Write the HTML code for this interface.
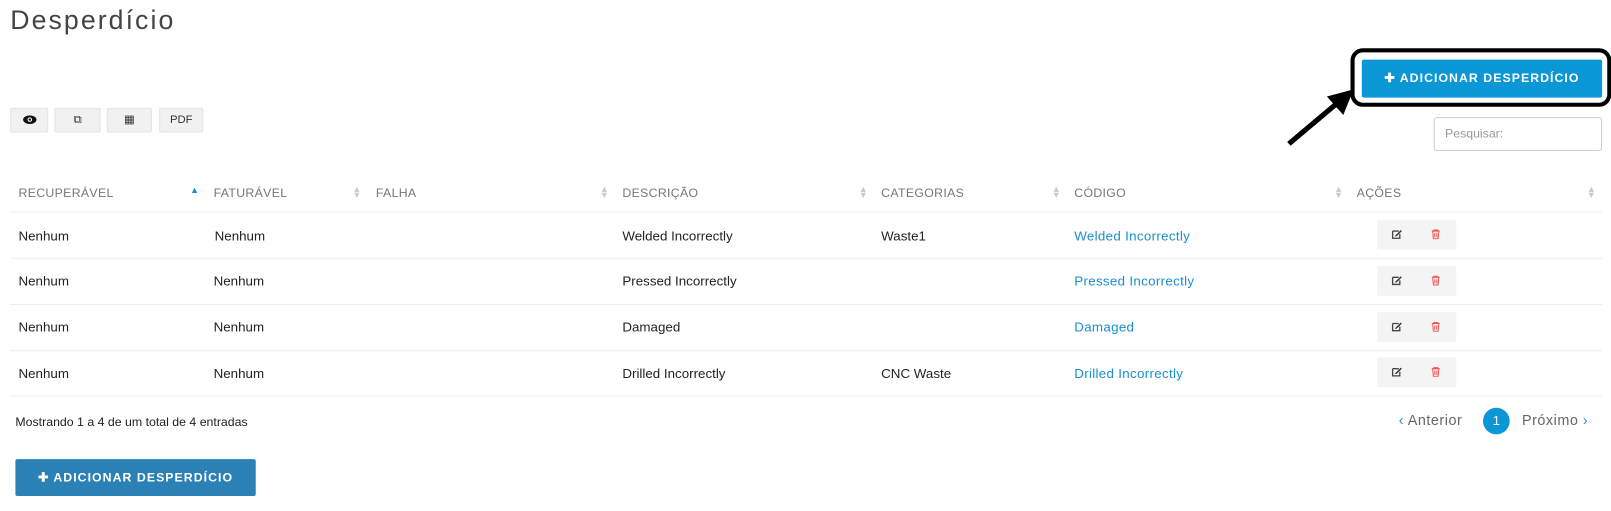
<!DOCTYPE html><html><head><style>
body{margin:0;width:1611px;height:511px;background:#fff;font-family:"Liberation Sans",sans-serif;overflow:hidden;color:#333}
#w{position:relative;width:1560px;height:495px;transform:scale(1.027);transform-origin:0 0}
.a{position:absolute}
.t{font-size:13px;color:#222}
.h{font-size:12px;color:#777;letter-spacing:.3px}
.s{position:absolute;font-size:9px;color:#ccc;line-height:6px}
.line{position:absolute;left:10px;width:1550px;height:1px;background:#eee}
.tb{position:absolute;top:105px;height:22px;background:#f1f1f1;border:1px solid #e3e3e3;border-radius:2px;font-size:11px;text-align:center;line-height:22px;color:#333}
.act{position:absolute;left:1341px;width:77px;height:29px;background:#f4f4f4}
.act svg{position:absolute;top:9px}
.lk{color:#1a8fd0;font-size:13px;letter-spacing:.3px}
.btn{position:absolute;color:#fff;font-size:12px;font-weight:bold;letter-spacing:1px;text-align:center}
</style></head><body><div id="w">
<div class="a" style="left:10px;top:4px;font-size:26px;color:#444;letter-spacing:2px">Desperdício</div>
<div class="tb" style="left:10px;width:35px"><svg width="14" height="9" viewBox="0 0 14 9" style="vertical-align:-1px"><ellipse cx="7" cy="4.5" rx="6.5" ry="4.2" fill="#111"/><circle cx="7" cy="4.5" r="2.2" fill="#fff"/><circle cx="7" cy="4.5" r="1.2" fill="#111"/></svg></div>
<div class="tb" style="left:53px;width:43px">⧉</div>
<div class="tb" style="left:104px;width:42px">▦</div>
<div class="tb" style="left:155px;width:41px">PDF</div>
<div class="a" style="left:1315px;top:47px;width:246px;height:49px;border:4px solid #000;border-radius:12px"></div>
<div class="btn" style="left:1326px;top:58px;width:234px;height:37px;line-height:37px;background:#0b96d6;border-radius:2px">✚ ADICIONAR DESPERDÍCIO</div>
<svg class="a" style="left:1250px;top:80px" width="80" height="65"><line x1="5" y1="60" x2="55" y2="18" stroke="#000" stroke-width="5"/><polygon points="68,7 42,14 58,32" fill="#000"/></svg>
<div class="a" style="left:1396px;top:114px;width:162px;height:31px;border:1px solid #ccc;border-radius:3px;font-size:12px;color:#999;line-height:31px;text-indent:10px">Pesquisar:</div>
<div class="a h" style="left:18px;top:181px">RECUPERÁVEL</div><div class="s" style="left:185px;top:182px;color:#1a8fd0">▲</div>
<div class="a h" style="left:208px;top:181px">FATURÁVEL</div><div class="s" style="left:343px;top:181px">▲<br>▼</div>
<div class="a h" style="left:366px;top:181px">FALHA</div><div class="s" style="left:584px;top:181px">▲<br>▼</div>
<div class="a h" style="left:606px;top:181px">DESCRIÇÃO</div><div class="s" style="left:836px;top:181px">▲<br>▼</div>
<div class="a h" style="left:858px;top:181px">CATEGORIAS</div><div class="s" style="left:1024px;top:181px">▲<br>▼</div>
<div class="a h" style="left:1046px;top:181px">CÓDIGO</div><div class="s" style="left:1299px;top:181px">▲<br>▼</div>
<div class="a h" style="left:1321px;top:181px">AÇÕES</div><div class="s" style="left:1545px;top:181px">▲<br>▼</div>
<div class="line" style="top:206px"></div><div class="line" style="top:251px"></div><div class="line" style="top:296px"></div><div class="line" style="top:341px"></div><div class="line" style="top:385px"></div>
<div class="a t" style="left:18px;top:222px">Nenhum</div><div class="a t" style="left:209px;top:222px">Nenhum</div><div class="a t" style="left:606px;top:222px">Welded Incorrectly</div><div class="a t" style="left:858px;top:222px">Waste1</div><div class="a lk" style="left:1046px;top:222px">Welded Incorrectly</div>
<div class="a t" style="left:18px;top:266px">Nenhum</div><div class="a t" style="left:208px;top:266px">Nenhum</div><div class="a t" style="left:606px;top:266px">Pressed Incorrectly</div><div class="a lk" style="left:1046px;top:266px">Pressed Incorrectly</div>
<div class="a t" style="left:18px;top:311px">Nenhum</div><div class="a t" style="left:208px;top:311px">Nenhum</div><div class="a t" style="left:606px;top:311px">Damaged</div><div class="a lk" style="left:1046px;top:311px">Damaged</div>
<div class="a t" style="left:18px;top:356px">Nenhum</div><div class="a t" style="left:208px;top:356px">Nenhum</div><div class="a t" style="left:606px;top:356px">Drilled Incorrectly</div><div class="a t" style="left:858px;top:356px">CNC Waste</div><div class="a lk" style="left:1046px;top:356px">Drilled Incorrectly</div>
<div class="act" style="top:214px"><svg style="left:14px" width="11" height="10"><path d="M1 2h6M1 2v7h7v-4" stroke="#444" stroke-width="1.3" fill="none"/><path d="M4 6l5-5 1 1-5 5-2 0z" fill="#333"/></svg><svg style="left:53px" width="8" height="10"><path d="M0 2h8M2 2V1h4v1M1 2l.7 7.5h4.6L7 2M3 4v4M5 4v4" stroke="#e55" stroke-width="1" fill="none"/></svg></div>
<div class="act" style="top:259px"><svg style="left:14px" width="11" height="10"><path d="M1 2h6M1 2v7h7v-4" stroke="#444" stroke-width="1.3" fill="none"/><path d="M4 6l5-5 1 1-5 5-2 0z" fill="#333"/></svg><svg style="left:53px" width="8" height="10"><path d="M0 2h8M2 2V1h4v1M1 2l.7 7.5h4.6L7 2M3 4v4M5 4v4" stroke="#e55" stroke-width="1" fill="none"/></svg></div>
<div class="act" style="top:304px"><svg style="left:14px" width="11" height="10"><path d="M1 2h6M1 2v7h7v-4" stroke="#444" stroke-width="1.3" fill="none"/><path d="M4 6l5-5 1 1-5 5-2 0z" fill="#333"/></svg><svg style="left:53px" width="8" height="10"><path d="M0 2h8M2 2V1h4v1M1 2l.7 7.5h4.6L7 2M3 4v4M5 4v4" stroke="#e55" stroke-width="1" fill="none"/></svg></div>
<div class="act" style="top:348px"><svg style="left:14px" width="11" height="10"><path d="M1 2h6M1 2v7h7v-4" stroke="#444" stroke-width="1.3" fill="none"/><path d="M4 6l5-5 1 1-5 5-2 0z" fill="#333"/></svg><svg style="left:53px" width="8" height="10"><path d="M0 2h8M2 2V1h4v1M1 2l.7 7.5h4.6L7 2M3 4v4M5 4v4" stroke="#e55" stroke-width="1" fill="none"/></svg></div>
<div class="a t" style="left:15px;top:404px;font-size:12px">Mostrando 1 a 4 de um total de 4 entradas</div>
<div class="a" style="left:1362px;top:401px;font-size:14px;color:#666;letter-spacing:.5px"><span style="color:#1a8fd0">‹</span> Anterior</div>
<div class="a" style="left:1444px;top:397px;width:26px;height:26px;border-radius:50%;background:#0b96d6;color:#fff;font-size:13px;text-align:center;line-height:26px">1</div>
<div class="a" style="left:1482px;top:401px;font-size:14px;color:#666;letter-spacing:.5px">Próximo <span style="color:#1a8fd0">›</span></div>
<div class="btn" style="left:15px;top:447px;width:234px;height:36px;line-height:36px;background:#2b80b6;border-radius:2px">✚ ADICIONAR DESPERDÍCIO</div>
</div></body></html>
